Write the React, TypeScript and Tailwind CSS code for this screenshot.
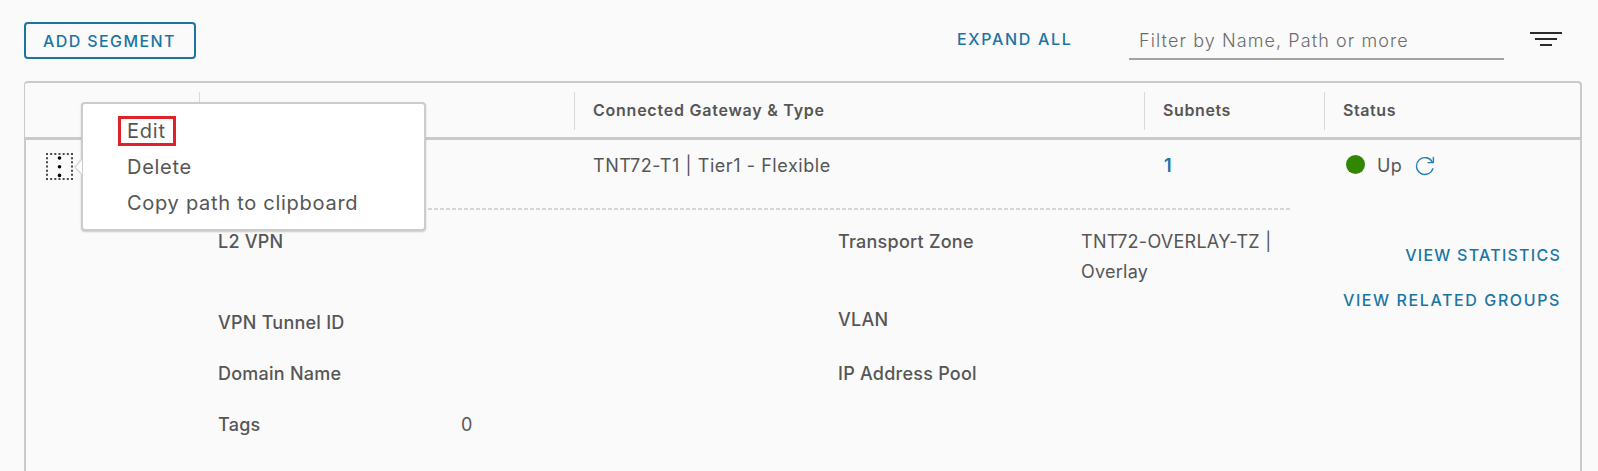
import type { ReactNode } from "react";

function HeaderCell({ children, className = "" }: { children?: ReactNode; className?: string }) {
  return (
    <div className={`h-[38px] border-l border-[#d9d9d9] pl-[18px] font-semibold leading-[36px] ${className}`}>
      {children}
    </div>
  );
}

function Label({ children }: { children: ReactNode }) {
  return <div className="h-[30px] whitespace-nowrap font-medium leading-[30px] tracking-[0.24px]">{children}</div>;
}

function FilterIcon() {
  return (
    <svg width="32" height="16" viewBox="0 0 32 16" fill="#2b2b2b">
      <rect x="0" y="1" width="32" height="2" />
      <rect x="5" y="7" width="22" height="2" />
      <rect x="10" y="13" width="12" height="2" />
    </svg>
  );
}

function RefreshIcon() {
  return (
    <svg width="20" height="20" viewBox="0 0 20 20" fill="none" stroke="#2180b5" strokeWidth="1.4" strokeLinecap="round" strokeLinejoin="round">
      <path d="M17.9 12.6A8.4 8.4 0 1 1 17.4 6.2" />
      <path d="M18.4 1.4V6.6H13" />
    </svg>
  );
}

function RowMenu() {
  return (
    <div className="absolute left-[35px] top-[-51px] z-10 h-[129px] w-[345px] rounded-[4px] border-2 border-[#cccccc] bg-white pl-[35px] pt-[10px] text-[20px] tracking-[0.72px] shadow-[0_1px_2px_rgba(0,0,0,0.2)]">
      <svg className="absolute left-[-9px] top-[54px]" width="8" height="18" viewBox="0 0 8 18" fill="#ffffff" stroke="#d6d6d6" strokeWidth="1.2">
        <path d="M8 1L1 9L8 17" />
      </svg>
      <div className="mt-[2px] h-[30px] w-[58px] border-[3px] border-[#de222b] pl-[6px] leading-[24px] tracking-[0.8px]">Edit</div>
      <div className="mt-[4px] h-[36px] pl-[9px] leading-[34px]">Delete</div>
      <div className="h-[36px] whitespace-nowrap pl-[9px] leading-[34px]">Copy path to clipboard</div>
    </div>
  );
}

export default function App() {
  return (
    <div className="h-[471px] w-[1598px] overflow-hidden bg-[#fafafa] pl-[24px] pr-[16px] font-['Inter',sans-serif] text-[18px] text-[#565656]">
      <div className="flex h-[81px] items-start pt-[22px]">
        <button className="h-[37px] w-[172px] rounded-[4px] border-2 border-[#1b75a3] pl-[17px] text-left text-[16px] font-medium leading-[32px] tracking-[1.4px] text-[#1b75a3]">ADD SEGMENT</button>
        <button className="ml-[761px] h-[34px] w-[120px] text-left text-[16px] font-medium leading-[34px] tracking-[1.7px] text-[#1b75a3]">EXPAND ALL</button>
        <div className="ml-[52px] h-[38px] w-[375px] border-b-2 border-[#a3a3a3] pl-[10px] font-light leading-[38px] tracking-[1.09px] text-[#6c6c6c]">Filter by Name, Path or more</div>
        <div className="ml-[26px] pt-[9px]"><FilterIcon /></div>
      </div>

      <div className="rounded-t-[4px] border-l border-r-2 border-t-2 border-[#cacaca]">
        <div className="grid h-[57px] grid-cols-[174px_375px_570px_180px_1fr] border-b-[3px] border-[#cacaca] pt-[9px] text-[16px]">
          <div />
          <HeaderCell />
          <HeaderCell className="tracking-[0.76px]">Connected Gateway &amp; Type</HeaderCell>
          <HeaderCell className="tracking-[0.6px]">Subnets</HeaderCell>
          <HeaderCell className="tracking-[0.6px]">Status</HeaderCell>
        </div>

        <div className="h-[331px] border-l border-[#cacaca]">
          <div className="grid h-[68px] grid-cols-[567px_571px_180px_1fr] leading-[51px]">
            <div className="pl-[20px] pt-[13px]">
              <div className="relative h-[27px] w-[27px]">
                <svg width="27" height="27" viewBox="0 0 27 27">
                  <path d="M0 1H27M0 26H27M1 0V27M26 0V27" fill="none" stroke="#4a4a4a" strokeWidth="2" strokeDasharray="2 2.16" />
                  <circle cx="13.5" cy="5" r="1.8" />
                  <circle cx="13.5" cy="13.7" r="1.8" />
                  <circle cx="13.5" cy="22.4" r="1.8" />
                </svg>
                <RowMenu />
              </div>
            </div>
            <div className="leading-[52px] tracking-[0.56px]">TNT72-T1 | Tier1 - Flexible</div>
            <div className="font-semibold text-[#1b75a3]">1</div>
            <div className="flex h-[51px] items-center pl-[2px]">
              <div className="mb-[2px] h-[19px] w-[19px] rounded-full bg-[#318700]" />
              <div className="ml-[12px] w-[38px] leading-[52px] tracking-[0.3px]">Up</div>
              <div className="mt-[1px]"><RefreshIcon /></div>
            </div>
          </div>

          <div className="flex pl-[192px]">
            <div className="w-[1072px]">
              <div className="h-[2px] bg-[repeating-linear-gradient(90deg,#d6d6d6_0_4px,transparent_4px_6px)]" />
              <div className="flex pt-[17px]">
                <div className="flex w-[243px] flex-col gap-[21px]">
                  <div className="mb-[30px]"><Label>L2 VPN</Label></div>
                  <Label>VPN Tunnel ID</Label>
                  <Label>Domain Name</Label>
                  <Label>Tags</Label>
                </div>
                <div className="w-[377px] pt-[183px] leading-[30px]">0</div>
                <div className="flex w-[243px] flex-col">
                  <Label>Transport Zone</Label>
                  <div className="mt-[48px]"><Label>VLAN</Label></div>
                  <div className="mt-[24px]"><Label>IP Address Pool</Label></div>
                </div>
                <div className="w-[209px] leading-[30px] tracking-[0.26px]">TNT72-OVERLAY-TZ | Overlay</div>
              </div>
            </div>
            <div className="flex flex-1 flex-col items-end pr-[19px] pt-[30px] text-[16px] font-medium leading-[34px] text-[#1b75a3]">
              <div className="h-[45px] tracking-[1.25px]">VIEW STATISTICS</div>
              <div className="tracking-[1.6px]">VIEW RELATED GROUPS</div>
            </div>
          </div>
        </div>
      </div>
    </div>
  );
}
